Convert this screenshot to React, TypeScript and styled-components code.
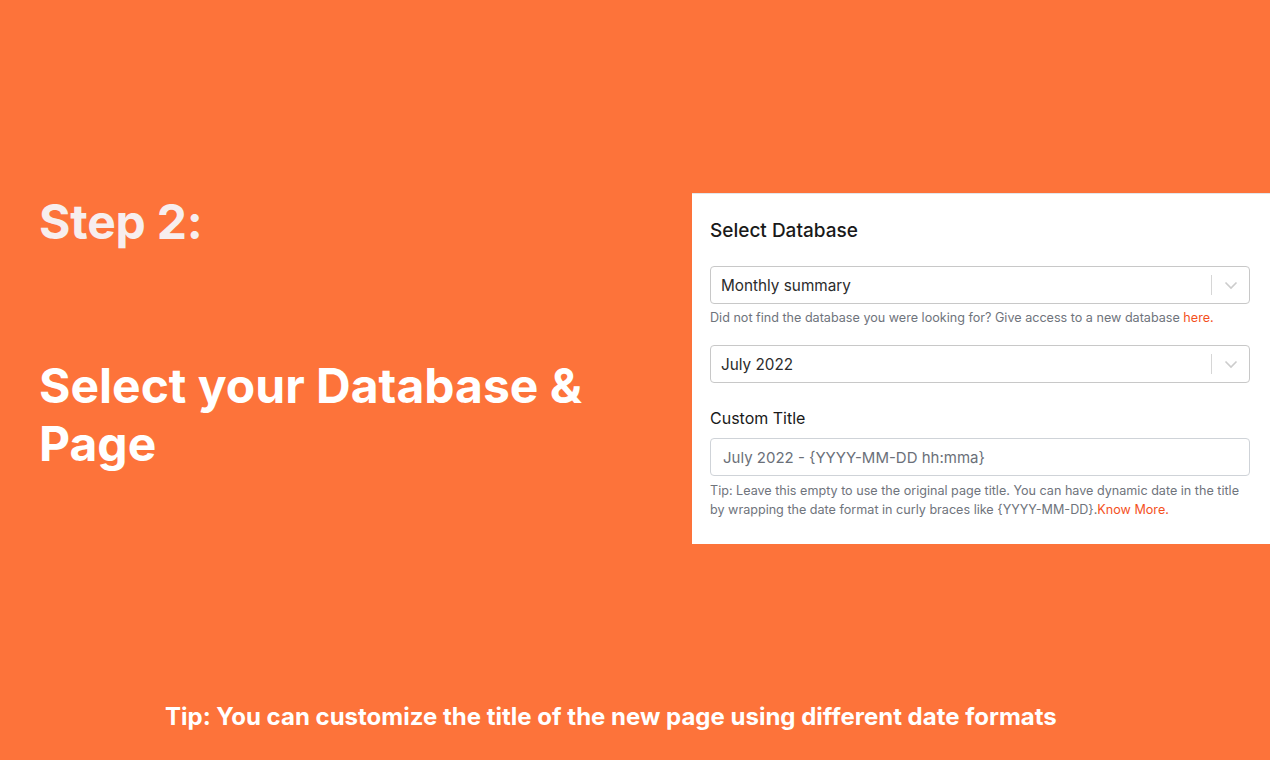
import React from "react";
import styled, { createGlobalStyle } from "styled-components";

const Global = createGlobalStyle`
  html, body { margin: 0; padding: 0; }
  body {
    background: #fd733a;
    font-family: Inter, "Noto Sans", sans-serif;
  }
  * { box-sizing: border-box; }
`;

const Page = styled.div`
  width: 1270px;
  height: 760px;
  background: #fd733a;
  display: flex;
  flex-direction: column;
  overflow: hidden;
`;

const Top = styled.div`
  display: flex;
  padding-top: 193px;
`;

const Left = styled.div`
  width: 692px;
  padding: 0 0 0 39px;
  display: flex;
  flex-direction: column;
`;

const Step = styled.h1`
  margin: 0;
  font-size: 48px;
  line-height: 58px;
  font-weight: 700;
  color: #f7eeee;
  letter-spacing: -0.2px;
`;

const Headline = styled.h2`
  margin: 106px 0 0;
  font-size: 48px;
  line-height: 58px;
  font-weight: 700;
  color: #ffffff;
  letter-spacing: 0;
  width: 600px;
`;

const Panel = styled.div`
  width: 578px;
  height: 351px;
  background: #ffffff;
  border-top: 1px solid #e3e6ea;
  padding: 26px 20px 0 18px;
  display: flex;
  flex-direction: column;
`;

const PanelTitle = styled.div`
  font-size: 19px;
  font-weight: 500;
  color: #1a1a1a;
  line-height: 22px;
`;

const Label = styled.div`
  font-size: 16px;
  font-weight: 400;
  color: #1a1a1a;
  line-height: 20px;
  margin-top: 25px;
`;

const SelectBox = styled.div<{ $mt: number }>`
  margin-top: ${(p) => p.$mt}px;
  height: 38px;
  border: 1px solid #c8c8c8;
  border-radius: 4px;
  display: flex;
  align-items: center;
  font-size: 15.3px;
  color: #2b2b2b;
`;

const SelectValue = styled.div`
  flex: 1;
  padding-left: 10px;
`;

const Indicator = styled.div`
  display: flex;
  align-items: center;
  height: 100%;
`;

const Separator = styled.div`
  width: 1px;
  height: 20px;
  background: #d6d6d6;
`;

const Chevron = styled.div`
  width: 37px;
  display: flex;
  justify-content: center;
  align-items: center;
`;

const InputBox = styled.div`
  margin-top: 10px;
  height: 38px;
  border: 1px solid #cfd3d8;
  border-radius: 4px;
  display: flex;
  align-items: center;
  padding-left: 12px;
  font-size: 15px;
  color: #6b7079;
`;

const Help = styled.div<{ $mt: number }>`
  margin-top: ${(p) => p.$mt}px;
  font-size: 12.6px;
  line-height: 19px;
  color: #6f747c;
`;

const Link = styled.a`
  color: #f4511e;
  text-decoration: none;
`;

const Tip = styled.div`
  margin: 158px 0 0 165px;
  font-size: 24px;
  font-weight: 700;
  color: #ffffff;
  line-height: 30px;
  letter-spacing: 0;
`;

const Select = ({ value, mt }: { value: string; mt: number }) => (
  <SelectBox $mt={mt}>
    <SelectValue>{value}</SelectValue>
    <Indicator>
      <Separator />
      <Chevron>
        <svg width="14" height="9" viewBox="0 0 14 9" fill="none">
          <path d="M1.5 1.5 L7 7 L12.5 1.5" stroke="#cccccc" strokeWidth="1.6" />
        </svg>
      </Chevron>
    </Indicator>
  </SelectBox>
);

export default function App() {
  return (
    <Page>
      <Global />
      <Top>
        <Left>
          <Step>Step 2:</Step>
          <Headline>Select your Database &amp; Page</Headline>
        </Left>
        <Panel>
          <PanelTitle>Select Database</PanelTitle>
          <Select value="Monthly summary" mt={24} />
          <Help $mt={4}>
            Did not find the database you were looking for? Give access to a new database{" "}
            <Link href="#">here.</Link>
          </Help>
          <Select value="July 2022" mt={18} />
          <Label>Custom Title</Label>
          <InputBox>July 2022 - {"{YYYY-MM-DD hh:mma}"}</InputBox>
          <Help $mt={5}>
            Tip: Leave this empty to use the original page title. You can have dynamic date in the title
            by wrapping the date format in curly braces like {"{YYYY-MM-DD}"}.
            <Link href="#">Know More.</Link>
          </Help>
        </Panel>
      </Top>
      <Tip>Tip: You can customize the title of the new page using different date formats</Tip>
    </Page>
  );
}
